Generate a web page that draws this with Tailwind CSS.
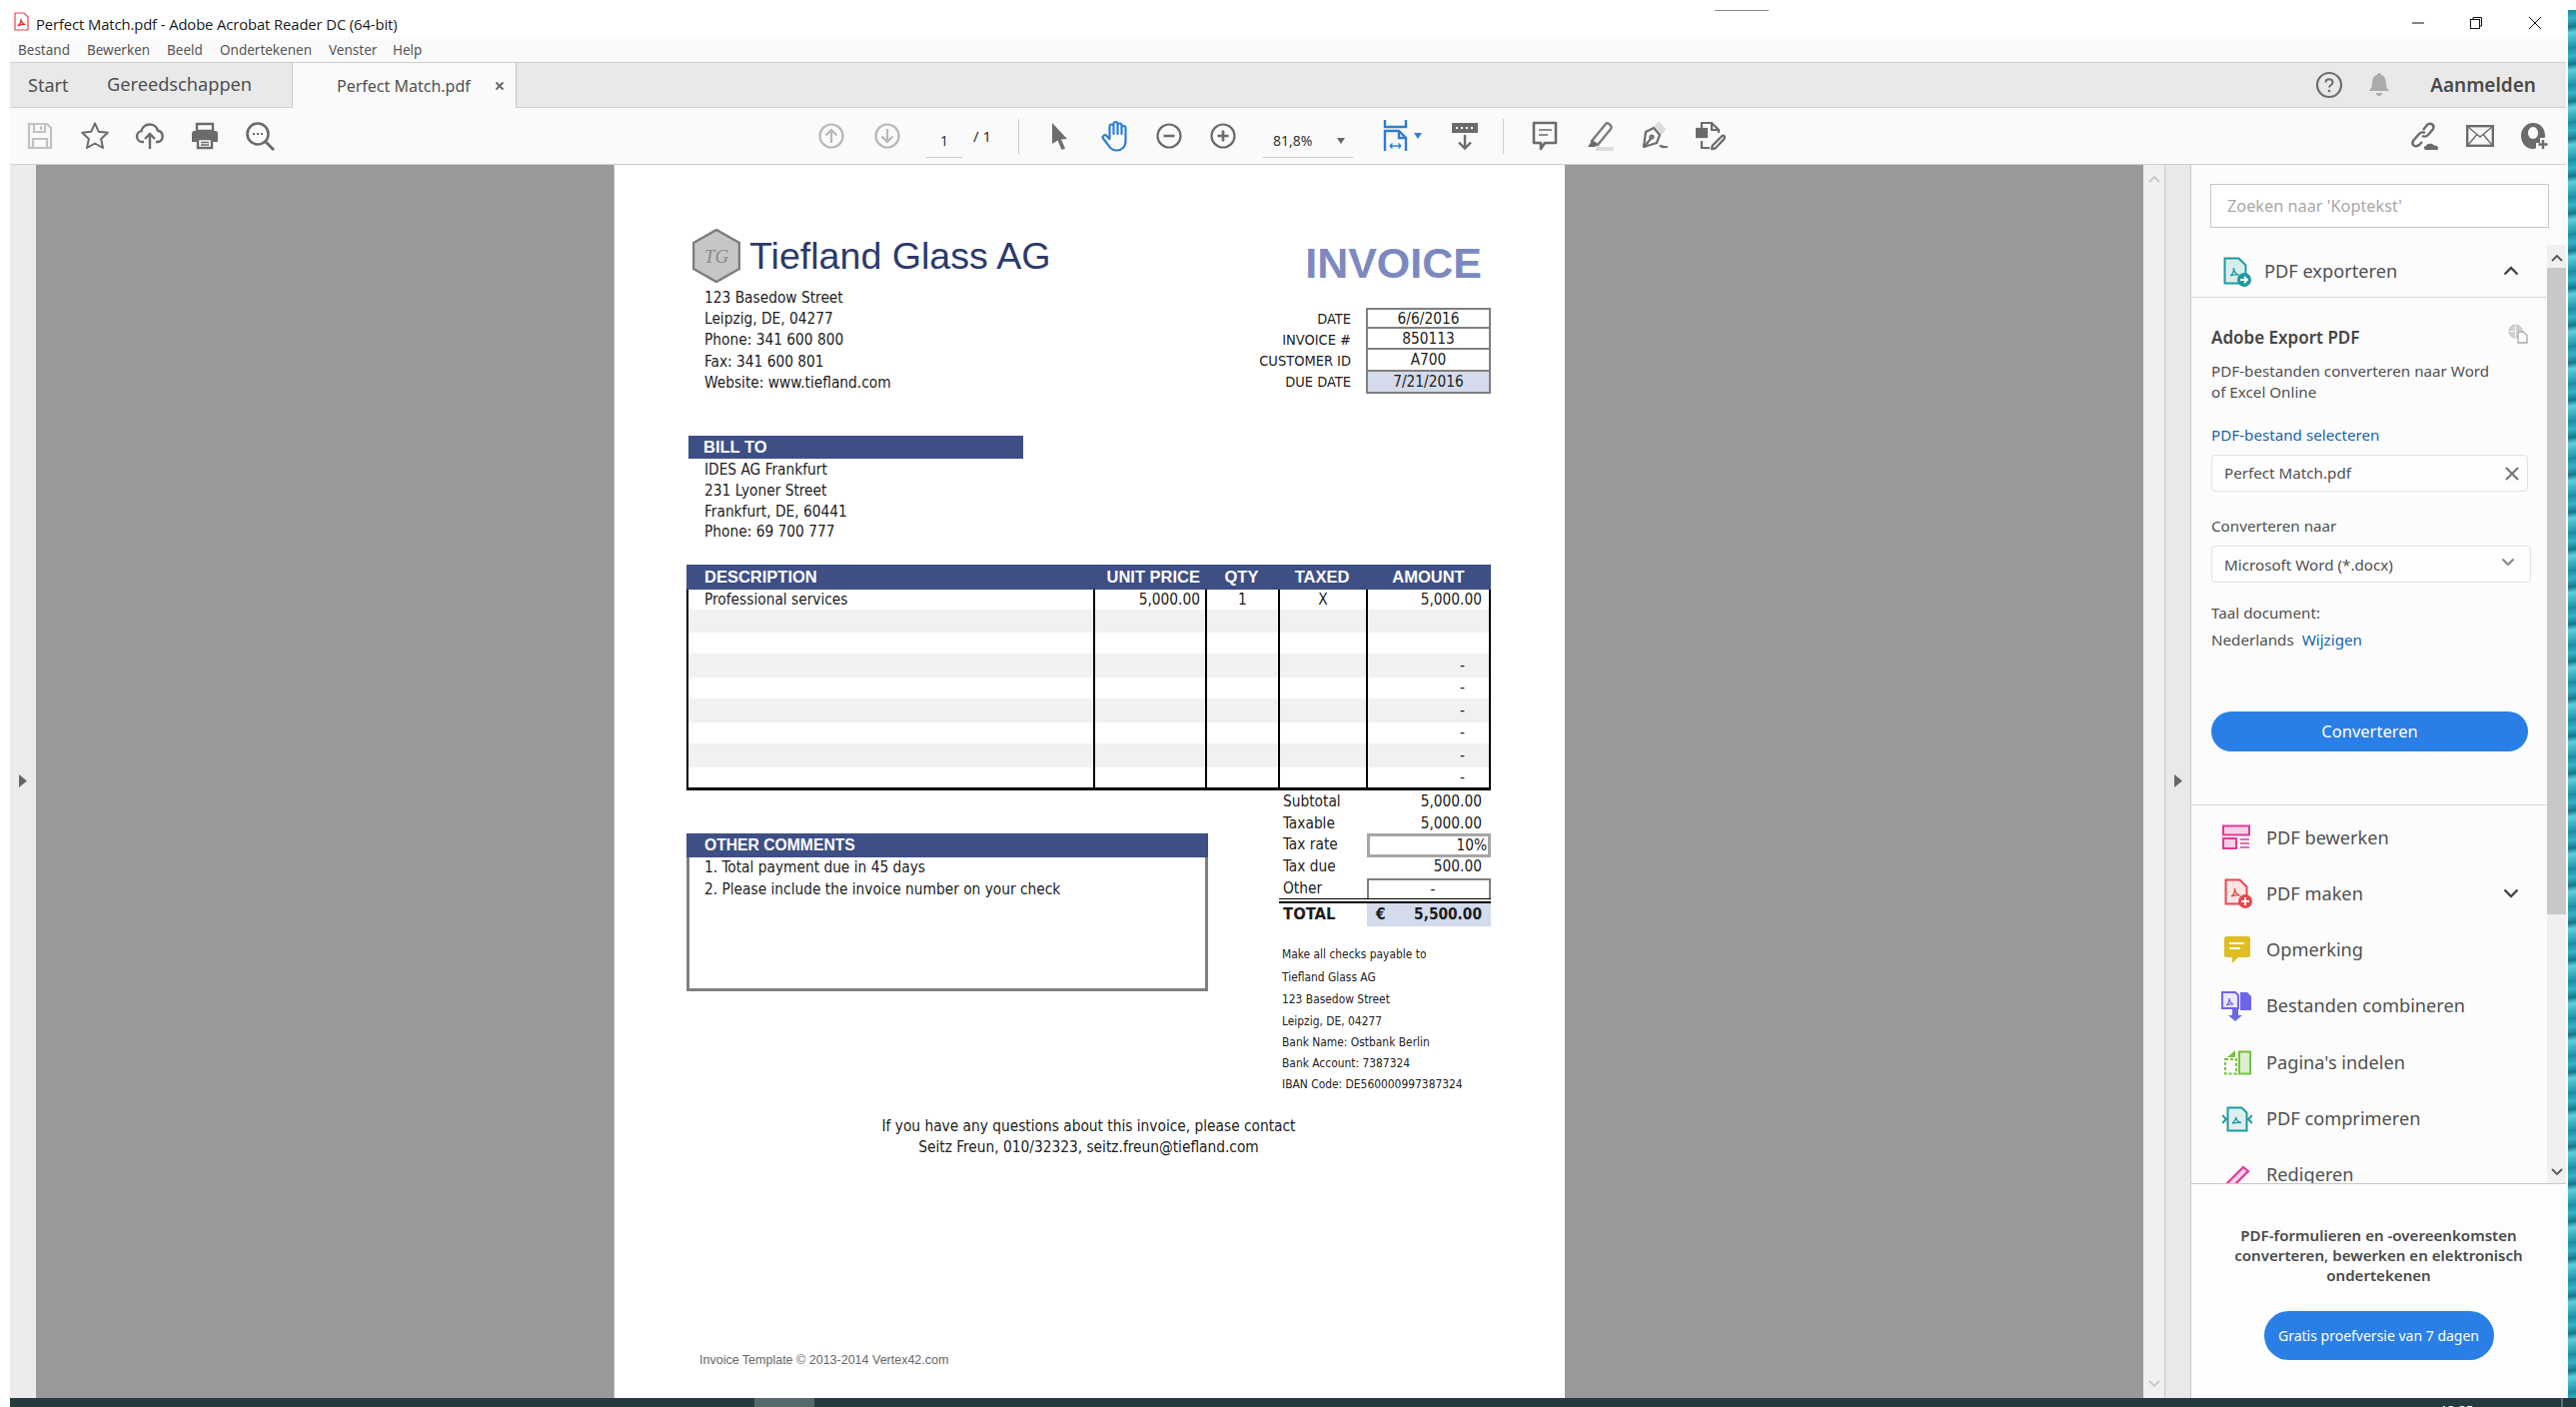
<!DOCTYPE html>
<html lang="nl">
<head>
<meta charset="utf-8">
<title>Perfect Match.pdf - Adobe Acrobat Reader DC</title>
<script src="https://cdn.jsdelivr.net/npm/@tailwindcss/browser@4"></script>
</head>
<body class="relative w-[2578px] h-[1408px] overflow-hidden bg-white flex font-['Noto_Sans',sans-serif] text-[#505050]">
<div class="absolute left-[1716px] top-[10px] w-[54px] h-px bg-[#8a8a8a]"></div>

<div class="w-[2570px] h-full flex flex-col shrink-0">
  <!-- title bar -->
  <div class="h-[37px] flex items-center bg-white shrink-0">
    <svg class="ml-[14px] mt-[6px]" width="15" height="19" viewBox="0 0 15 19"><path d="M1 1h9l4 4v13H1z" fill="#fff" stroke="#e2474b" stroke-width="1.2"/><path d="M3.500 14c2-1 3.500-4 3.500-7 0 3 2 5 4.500 5.500-3-.5-5.500 0-8 1.500z" fill="none" stroke="#e2262b" stroke-width="1.200"/></svg>
    <span class="ml-[7px] mt-[11px] text-[14.800px] text-[#1a1a1a] leading-none font-['Open_Sans',sans-serif] tracking-[-0.1px]">Perfect Match.pdf - Adobe Acrobat Reader DC (64-bit)</span>
    <div class="ml-auto flex items-center pr-[26px] mt-[8px]">
      <svg width="14" height="14" viewBox="0 0 14 14"><path d="M1 7h12" stroke="#111" stroke-width="1"/></svg>
      <svg class="ml-[44px]" width="14" height="14" viewBox="0 0 14 14" fill="none" stroke="#111" stroke-width="1"><rect x="1.500" y="3.500" width="9" height="9" fill="#fff"/><path d="M4 3.500V1.500h8.500V10h-2"/></svg>
      <svg class="ml-[45px]" width="14" height="14" viewBox="0 0 14 14" fill="none" stroke="#111" stroke-width="1"><path d="M1 1l12 12M13 1L1 13"/></svg>
    </div>
  </div>

  <div class="flex-1 min-h-0 flex flex-col ml-[10px] mr-[2px]">
    <!-- menu bar -->
    <div class="h-[26px] shrink-0 bg-[#fafafa] flex items-center pl-[8px] pt-[2px] text-[13.500px] text-[#555] border-b border-[#cfcfcf]">
      <span class="w-[69px]">Bestand</span><span class="w-[80px]">Bewerken</span><span class="w-[53px]">Beeld</span><span class="w-[109px]">Ondertekenen</span><span class="w-[64px]">Venster</span><span>Help</span>
    </div>
    <!-- tabs -->
    <div class="h-[45px] shrink-0 bg-[#e9e9e9] flex items-stretch border-b border-[#cfcfcf]">
      <span class="ml-[18px] w-[79px] self-center text-[18px]">Start</span>
      <span class="w-[185px] self-center text-[18.200px]">Gereedschappen</span>
      <div class="w-[225px] -mb-px bg-[#fafafa] border-x border-[#c8c8c8] flex items-center pl-[44px]">
        <span class="text-[16px] w-[158px]">Perfect Match.pdf</span>
        <svg width="10" height="10" viewBox="0 0 10 10"><path d="M1.500 1.500l7 7M8.500 1.500l-7 7" stroke="#666" stroke-width="1.800"/></svg>
      </div>
      <div class="ml-auto flex items-center pr-[30px]">
        <svg width="28" height="28" viewBox="0 0 28 28" fill="none"><circle cx="14" cy="14" r="12" stroke="#6e6e6e" stroke-width="2.200"/><path d="M10.500 11.500c0-4.500 7-4.500 7 0 0 3-3.500 2.500-3.500 5" stroke="#6e6e6e" stroke-width="2"/><circle cx="14" cy="20" r="1.300" fill="#6e6e6e"/></svg>
        <svg class="ml-[24px]" width="24" height="28" viewBox="0 0 24 28"><path d="M12 2c1.500 0 2 1 2 2 4 1 5 5 5 9 0 4 2 5 3 7H2c1-2 3-3 3-7 0-4 1-8 5-9 0-1 .5-2 2-2z" fill="#ababab"/><path d="M9 22h6c0 2-1.500 3-3 3s-3-1-3-3z" fill="#ababab"/></svg>
        <span class="ml-[39px] text-[19px] font-semibold text-[#4a4a4a]">Aanmelden</span>
      </div>
    </div>
    <!-- toolbar -->
    <div class="h-[57px] shrink-0 bg-[#fafafa] flex items-center border-b border-[#cfcfcf] pl-[2px] pr-[4px]">
      <div class="w-[55px] flex justify-center"><svg width="26" height="28" viewBox="0 0 26 28" fill="none" stroke="#c2c2c2" stroke-width="2.200"><path d="M2 2h18l4 4v20H2z"/><path d="M7 2v8h11V2M14 4v4M6 26v-9h14v9"/></svg></div>
      <div class="w-[55px] flex justify-center"><svg width="30" height="30" viewBox="0 0 30 30" fill="none" stroke="#6b6b6b" stroke-width="2"><path d="M15 2.500l3.800 8.300 9 1-6.700 6.200 1.900 9L15 22.500 7 27l1.900-9-6.700-6.200 9-1z" stroke-linejoin="round"/></svg></div>
      <div class="w-[55px] flex justify-center"><svg width="30" height="30" viewBox="0 0 30 30" fill="none" stroke="#6b6b6b" stroke-width="2.400"><path d="M9 21H7.500A5.500 5.500 0 0 1 6.500 10.100 8.500 8.500 0 0 1 23 9.800 5.700 5.700 0 0 1 23 21h-2"/><path d="M15 28V13M10 18l5-5 5 5"/></svg></div>
      <div class="w-[55px] flex justify-center"><svg width="28" height="28" viewBox="0 0 28 28"><path d="M6 2h16v7H6z" fill="none" stroke="#6b6b6b" stroke-width="2.400"/><path d="M3 9h22a2.500 2.500 0 0 1 2 2.500V20h-5v-4H6v4H1v-8.500A2.500 2.500 0 0 1 3 9z" fill="#6b6b6b"/><path d="M7 17h14v9H7z" fill="none" stroke="#6b6b6b" stroke-width="2.400"/><path d="M10 20.500h8M10 23h8" stroke="#6b6b6b" stroke-width="1.300"/></svg></div>
      <div class="w-[55px] flex justify-center"><svg width="30" height="30" viewBox="0 0 30 30" fill="none" stroke="#6b6b6b" stroke-width="2.600"><circle cx="13" cy="13" r="10.500"/><path d="M20.500 20.500L29 29" stroke-width="3"/><path d="M8 13h2M12 13h2M16 13h2" stroke-width="2"/></svg></div>

      <div class="ml-[517px] w-[56px] flex justify-center"><svg width="26" height="26" viewBox="0 0 26 26" fill="none" stroke="#b8b8b8" stroke-width="2.200"><circle cx="13" cy="13" r="11.500"/><path d="M13 20V7M7.500 12.500L13 7l5.500 5.500"/></svg></div>
      <div class="w-[55px] flex justify-center"><svg width="26" height="26" viewBox="0 0 26 26" fill="none" stroke="#b8b8b8" stroke-width="2.200"><circle cx="13" cy="13" r="11.500"/><path d="M13 6v13M7.500 13.500L13 19l5.500-5.500"/></svg></div>
      <div class="ml-[12px] w-[36px] h-[34px] flex items-center justify-center text-[14px] border-b border-[#c8c8c8] text-[#333] self-end mb-[6px]">1</div>
      <span class="ml-[11px] w-[18px] text-[15px] text-[#333] whitespace-nowrap">/ 1</span>
      <div class="ml-[27px] w-px h-[35px] bg-[#d0d0d0]"></div>
      <div class="ml-[13px] w-[55px] flex justify-center"><svg width="18" height="28" viewBox="0 0 18 28"><path d="M1 1l15 16-6 .5 4 9-3.500 1.500-4-9.500L1 22z" fill="#6e6e6e"/></svg></div>
      <div class="w-[55px] flex justify-center"><svg width="28" height="32" viewBox="0 0 28 32" fill="none" stroke="#2d7dd2" stroke-width="2.200" stroke-linejoin="round"><path d="M8.500 19V6.500a2 2 0 0 1 4 0V14V4a2 2 0 0 1 4 0v10V5.500a2 2 0 0 1 4 0V14V8a2 2 0 0 1 4 0v13c0 6-4 9.500-9 9.500-4 0-6.500-2-8.500-5.500L2 18.500c-1.500-2.500 2-4.500 3.500-2.500z"/></svg></div>
      <div class="w-[54px] flex justify-center"><svg width="26" height="26" viewBox="0 0 26 26" fill="none" stroke="#6b6b6b" stroke-width="2.200"><circle cx="13" cy="13" r="11.500"/><path d="M7.500 13h11" stroke-width="2.600"/></svg></div>
      <div class="w-[54px] flex justify-center"><svg width="26" height="26" viewBox="0 0 26 26" fill="none" stroke="#6b6b6b" stroke-width="2.200"><circle cx="13" cy="13" r="11.500"/><path d="M7.500 13h11M13 7.500v11" stroke-width="2.600"/></svg></div>
      <div class="ml-[13px] w-[90px] h-[34px] self-end mb-[6px] flex items-center justify-between pl-[10px] pr-[8px] border-b border-[#c8c8c8] text-[14px] text-[#333]"><span>81,8%</span><svg width="8" height="6" viewBox="0 0 8 6"><path d="M0 0h8L4 6z" fill="#666"/></svg></div>
      <div class="ml-[22px] w-[54px] flex justify-center items-center gap-[5px]"><svg width="26" height="32" viewBox="0 0 26 32" fill="none" stroke="#2d7dd2" stroke-width="2.400"><path d="M2 0v7h21V0"/><path d="M2 31V11h14l7 7v13"/><path d="M16 11v7h7" /><path d="M7 26h11M7 26l2.500-2.500M7 26l2.500 2.500M18 26l-2.500-2.500M18 26l-2.500 2.500" stroke-width="1.400"/></svg><svg width="8" height="6" viewBox="0 0 8 6"><path d="M0 0h8L4 6z" fill="#2d7dd2"/></svg></div>
      <div class="ml-[9px] w-[54px] flex justify-center"><svg width="28" height="28" viewBox="0 0 28 28" fill="none"><rect x="1" y="1" width="26" height="10" fill="#6b6b6b"/><path d="M5 6h2M10 6h2M15 6h2M20 6h2" stroke="#fff" stroke-width="2"/><path d="M14 13v13M8 20.500l6 6 6-6" stroke="#6b6b6b" stroke-width="2.400"/></svg></div>
      <div class="ml-[11px] w-px h-[35px] bg-[#d0d0d0]"></div>
      <div class="ml-[13px] w-[55px] flex justify-center"><svg width="26" height="31" viewBox="0 0 26 31" fill="none" stroke="#6b6b6b" stroke-width="2.600"><path d="M2 2h22v20H13l-4 6v-6H2z" stroke-linejoin="round"/><path d="M7 9h13M7 14h9" stroke-width="1.600"/></svg></div>
      <div class="w-[55px] flex justify-center"><svg width="30" height="30" viewBox="0 0 30 30"><path d="M7 20L21 3c2-2 7 2 5 5L13 24z" fill="none" stroke="#7a7a7a" stroke-width="2.400"/><path d="M7 20l6 4-3 2H3z" fill="#6b6b6b"/><path d="M11 26h18v4H11z" fill="#dcdcdc"/></svg></div>
      <div class="w-[56px] flex justify-center"><svg width="30" height="30" viewBox="0 0 30 30" fill="none" stroke="#6b6b6b" stroke-width="2.200"><path d="M15 6l4-4 6 6-4 5" fill="#dcdcdc" stroke="#dcdcdc"/><path d="M6 11l8-4 6 7-3 8-13 4z" stroke-linejoin="round"/><path d="M4 26l7-8"/><circle cx="12" cy="16" r="1.500"/><path d="M20 26c2-4 2 2 3 0s1 1 2 0 1 1 3 0" stroke-width="1.800"/></svg></div>
      <div class="w-[56px] flex justify-center"><svg width="30" height="30" viewBox="0 0 30 30" fill="none" stroke="#6b6b6b" stroke-width="2.200"><rect x="1" y="8" width="10" height="8" fill="#6b6b6b"/><path d="M6 8V2h10l7 7v3M16 2v7h7M6 20v7h8"/><path d="M17 27l-1 2 .5-4 10-10c2-1 3 1 2 3L19 28z"/></svg></div>

      <div class="ml-auto w-[55px] flex justify-center"><svg width="32" height="30" viewBox="0 0 32 30" fill="none" stroke="#6b6b6b" stroke-width="2.400"><path d="M14 9l4-5c3-3 8 0 6 4l-5 6c-2 2-4 2-6 1M16 12c-2-1-4-1-6 1l-6 7c-2 4 2 7 6 4l3-3"/><path d="M17 29c-2.500 0-3-4 0-4 .5-3 7-3 8-.5 4-1 6 4.500 2 4.500z" fill="#6b6b6b" stroke="none"/></svg></div>
      <div class="w-[55px] flex justify-center"><svg width="28" height="22" viewBox="0 0 28 22" fill="none" stroke="#6b6b6b" stroke-width="2.400"><rect x="1.200" y="1.200" width="25.600" height="19.600"/><path d="M2 2l12 10L26 2M2 20l8.500-10M26 20l-8.500-10" stroke-width="1.400"/></svg></div>
      <div class="w-[55px] flex justify-center"><svg width="30" height="28" viewBox="0 0 30 28"><path d="M13 1c6.500 0 12 5 12 12.500 0 1-.1 2-.3 2.500H20v5h-4v5.600A13 13 0 0 1 13 27C6 27 1 21 1 14S6 1 13 1z" fill="#6b6b6b"/><path d="M13 5c3 0 5 3 5 6s-2 6-5 6-5-3-5-6 2-6 5-6z" fill="#fafafa"/><path d="M23 18v9M18.500 22.500h9" stroke="#6b6b6b" stroke-width="2.400"/></svg></div>
    </div>

    <!-- document area -->
    <div class="flex-1 min-h-0 flex">
      <div class="w-[26px] bg-[#ececec] flex items-center justify-center"><svg class="mt-[-2px]" width="8" height="13" viewBox="0 0 8 13"><path d="M0 0l8 6.500L0 13z" fill="#666"/></svg></div>
      <div class="w-[578px] bg-[#999999]"></div>

      <!-- invoice page -->
      <div class="w-[952px] bg-white flex flex-col pl-[72px] pr-[74px] pt-[64px] pb-[29px] text-[#1c1c1c] text-[15.300px] font-['DejaVu_Sans',sans-serif] [font-stretch:condensed] leading-[21px] border-l border-[#b5b5b5]">
        <div class="h-[207px] flex justify-between shrink-0">
          <div>
            <div class="ml-[6px] h-[54px] flex items-start">
              <div class="relative w-[48px] h-[54px]">
                <svg width="48" height="54" viewBox="0 0 48 54"><path d="M24 1l23 13v26L24 53 1 40V14z" fill="#c6c6c6" stroke="#7c7c7c" stroke-width="2.500"/></svg>
                <span class="absolute inset-0 flex items-center justify-center font-['Liberation_Serif',serif] italic text-[19px] text-[#8a8a8a]">TG</span>
              </div>
              <span class="ml-[9px] mt-[6px] font-['Liberation_Sans',sans-serif] [font-stretch:normal] text-[37.600px] leading-[42px] text-[#2c3a6c] whitespace-nowrap">Tiefland Glass AG</span>
            </div>
            <div class="ml-[18px] mt-[5px] [&>p]:h-[21.200px] whitespace-nowrap">
              <p>123 Basedow Street</p><p>Leipzig, DE, 04277</p><p>Phone: 341 600 800</p><p>Fax: 341 600 801</p><p>Website: www.tiefland.com</p>
            </div>
          </div>
          <div class="flex flex-col items-end">
            <div class="mt-[18px] mr-[9px] h-[32px] font-['Liberation_Sans',sans-serif] [font-stretch:normal] font-bold text-[43px] leading-[32px] text-[#7b89c0]">INVOICE</div>
            <div class="mt-[29px] w-[300px] grid grid-cols-[175px_125px] text-right">
              <div class="pr-[15px] h-[21px] text-[14.500px] leading-[23px]">DATE</div><div class="h-[21px] border-2 border-[#7f7f7f] text-center leading-[18px]">6/6/2016</div>
              <div class="pr-[15px] h-[21px] text-[14.500px] leading-[23px]">INVOICE #</div><div class="h-[21px] border-x-2 border-b-2 border-[#7f7f7f] text-center leading-[20px]">850113</div>
              <div class="pr-[15px] h-[22px] text-[14.500px] leading-[23px]">CUSTOMER ID</div><div class="h-[22px] border-x-2 border-b-2 border-[#7f7f7f] text-center leading-[20px]">A700</div>
              <div class="pr-[15px] h-[22px] text-[14.500px]">DUE DATE</div><div class="h-[22px] border-x-2 border-b-2 border-[#7f7f7f] bg-[#d3dbec] text-center leading-[20px]">7/21/2016</div>
            </div>
          </div>
        </div>

        <div class="ml-[2px] w-[335px] h-[23px] bg-[#3e4f85] pl-[15px] font-['Liberation_Sans',sans-serif] [font-stretch:normal] font-bold text-[16.500px] leading-[23px] text-white shrink-0">BILL TO</div>
        <div class="ml-[18px] mt-px [&>p]:h-[20.800px] shrink-0">
          <p>IDES AG Frankfurt</p><p>231 Lyoner Street</p><p>Frankfurt, DE, 60441</p><p>Phone: 69 700 777</p>
        </div>

        <!-- items table -->
        <div class="mt-[22px] shrink-0">
          <div class="h-[25px] bg-[#3e4f85] grid grid-cols-[407px_112px_73px_88px_125px] font-['Liberation_Sans',sans-serif] [font-stretch:normal] font-bold text-[16.500px] leading-[25px] text-white">
            <div class="pl-[18px]">DESCRIPTION</div><div class="text-right pr-[5px] whitespace-nowrap">UNIT PRICE</div><div class="text-center">QTY</div><div class="text-center">TAXED</div><div class="text-center">AMOUNT</div>
          </div>
          <div class="border-x-2 border-b-[3px] border-black">
            <div class="h-[20px] grid grid-cols-[405px_112px_73px_88px_123px] leading-[20px]"><div class="pl-[16px]">Professional services</div><div class="border-l-2 border-black text-right pr-[5px]">5,000.00</div><div class="border-l-2 border-black text-center">1</div><div class="border-l-2 border-black text-center">X</div><div class="border-l-2 border-black text-right pr-[7px]">5,000.00</div></div>
            <div class="h-[23px] bg-[#f1f1f1] grid grid-cols-[405px_112px_73px_88px_123px]"><div></div><div class="border-l-2 border-black"></div><div class="border-l-2 border-black"></div><div class="border-l-2 border-black"></div><div class="border-l-2 border-black"></div></div>
            <div class="h-[21px] grid grid-cols-[405px_112px_73px_88px_123px]"><div></div><div class="border-l-2 border-black"></div><div class="border-l-2 border-black"></div><div class="border-l-2 border-black"></div><div class="border-l-2 border-black"></div></div>
            <div class="h-[24px] bg-[#f1f1f1] grid grid-cols-[405px_112px_73px_88px_123px]"><div></div><div class="border-l-2 border-black"></div><div class="border-l-2 border-black"></div><div class="border-l-2 border-black"></div><div class="border-l-2 border-black text-right pr-[24px] leading-[24px]">-</div></div>
            <div class="h-[21px] grid grid-cols-[405px_112px_73px_88px_123px]"><div></div><div class="border-l-2 border-black"></div><div class="border-l-2 border-black"></div><div class="border-l-2 border-black"></div><div class="border-l-2 border-black text-right pr-[24px]">-</div></div>
            <div class="h-[24px] bg-[#f1f1f1] grid grid-cols-[405px_112px_73px_88px_123px]"><div></div><div class="border-l-2 border-black"></div><div class="border-l-2 border-black"></div><div class="border-l-2 border-black"></div><div class="border-l-2 border-black text-right pr-[24px] leading-[24px]">-</div></div>
            <div class="h-[21px] grid grid-cols-[405px_112px_73px_88px_123px]"><div></div><div class="border-l-2 border-black"></div><div class="border-l-2 border-black"></div><div class="border-l-2 border-black"></div><div class="border-l-2 border-black text-right pr-[24px]">-</div></div>
            <div class="h-[24px] bg-[#f1f1f1] grid grid-cols-[405px_112px_73px_88px_123px]"><div></div><div class="border-l-2 border-black"></div><div class="border-l-2 border-black"></div><div class="border-l-2 border-black"></div><div class="border-l-2 border-black text-right pr-[24px] leading-[24px]">-</div></div>
            <div class="h-[20px] grid grid-cols-[405px_112px_73px_88px_123px]"><div></div><div class="border-l-2 border-black"></div><div class="border-l-2 border-black"></div><div class="border-l-2 border-black"></div><div class="border-l-2 border-black text-right pr-[24px] leading-[20px]">-</div></div>
          </div>
        </div>

        <!-- comments + totals -->
        <div class="flex justify-between shrink-0">
          <div class="mt-[43px] w-[522px] h-[158px] border-x-[3px] border-b-[3px] border-[#7f7f7f]">
            <div class="-mx-[3px] h-[24px] bg-[#3e4f85] pl-[18px] font-['Liberation_Sans',sans-serif] [font-stretch:normal] font-bold text-[15.700px] leading-[24px] text-white">OTHER COMMENTS</div>
            <div class="pl-[15px] [&>p]:h-[22px]"><p>1. Total payment due in 45 days</p><p>2. Please include the invoice number on your check</p></div>
          </div>
          <div class="w-[212px]">
            <div class="h-[22px] flex leading-[23px]"><span class="w-[88px] pl-[4px]">Subtotal</span><span class="flex-1 text-right pr-[9px]">5,000.00</span></div>
            <div class="h-[22px] flex leading-[23px]"><span class="w-[88px] pl-[4px]">Taxable</span><span class="flex-1 text-right pr-[9px]">5,000.00</span></div>
            <div class="h-[22px] flex"><span class="w-[88px] pl-[4px]">Tax rate</span><span class="flex-1 h-[24px] -mt-px border-[3px] border-[#a6a6a6] text-right leading-[18px] pr-[1px]">10%</span></div>
            <div class="h-[22px] flex"><span class="w-[88px] pl-[4px]">Tax due</span><span class="flex-1 text-right pr-[9px]">500.00</span></div>
            <div class="h-[21px] flex border-b border-black"><span class="w-[88px] pl-[4px] leading-[20px]">Other</span><span class="flex-1 border-x-2 border-t-2 border-[#7f7f7f] text-center pl-[8px] leading-[18px]">-</span></div>
            <div class="h-[25px] flex border-t-[2px] mt-[2px] border-black font-bold"><span class="w-[88px] pl-[4px] leading-[22px] text-[16.500px]">TOTAL</span><span class="flex-1 bg-[#d3dbec] flex justify-between pl-[9px] pr-[9px] leading-[22px]"><span>€</span><span>5,500.00</span></span></div>
            <div class="mt-[18px] pl-[3px] text-[11.900px] whitespace-nowrap">
              <p class="h-[22.500px]">Make all checks payable to</p><p class="h-[22.500px]">Tiefland Glass AG</p><p class="h-[21.500px]">123 Basedow Street</p><p class="h-[21px]">Leipzig, DE, 04277</p><p class="h-[21px]">Bank Name: Ostbank Berlin</p><p class="h-[21px]">Bank Account: 7387324</p><p class="h-[21px]">IBAN Code: DE560000997387324</p>
            </div>
          </div>
        </div>

        <div class="mt-[21px] text-center [&>p]:h-[21px] shrink-0"><p>If you have any questions about this invoice, please contact</p><p>Seitz Freun, 010/32323, seitz.freun@tiefland.com</p></div>
        <div class="mt-auto ml-[13px] font-['Liberation_Sans',sans-serif] [font-stretch:normal] text-[12.500px] leading-[18px] text-[#666]">Invoice Template © 2013-2014 Vertex42.com</div>
      </div>

      <div class="w-[579px] bg-[#999999]"></div>
      <!-- doc scrollbar -->
      <div class="w-[22px] bg-[#f0f0f0] flex flex-col justify-between items-center py-[10px] border-r border-[#c8c8c8]">
        <svg width="12" height="8" viewBox="0 0 12 8"><path d="M1 7l5-5 5 5" fill="none" stroke="#cacaca" stroke-width="2"/></svg>
        <svg width="12" height="8" viewBox="0 0 12 8"><path d="M1 1l5 5 5-5" fill="none" stroke="#cacaca" stroke-width="2"/></svg>
      </div>
      <div class="w-[26px] bg-[#e9e9e9] flex items-center justify-center border-r border-[#c8c8c8]"><svg class="mt-[-2px]" width="8" height="13" viewBox="0 0 8 13"><path d="M0 0l8 6.500L0 13z" fill="#666"/></svg></div>

      <!-- right panel -->
      <div class="w-[375px] bg-[#fcfcfc] flex flex-col">
        <div class="ml-[19px] mr-[17px] mt-[19px] h-[44px] shrink-0 bg-white border border-[#c8c8c8] pl-[16px] flex items-center text-[16.300px] text-[#a8a8a8]">Zoeken naar 'Koptekst'</div>
        <div class="mt-[17px] h-[939px] shrink-0 flex overflow-hidden">
          <div class="w-[356px] h-full overflow-hidden">
            <div class="h-[53px] border-b border-[#d8d8d8] flex items-center pl-[32px] pr-[28px] pt-[2px]">
              <svg width="28" height="30" viewBox="0 0 28 30"><path d="M1.500 1.500h14l7 7v18h-21z" fill="#d8eeee" stroke="#1f9a9d" stroke-width="2"/><path d="M7 19c2-1 3.500-4 3.500-8 0 3.500 2 6 5 7-3-.3-6 0-8.500 1z" fill="none" stroke="#1f9a9d" stroke-width="1.300"/><circle cx="21" cy="23" r="7" fill="#1f9a9d"/><path d="M17 23h7M21 20l3 3-3 3" fill="none" stroke="#fff" stroke-width="1.800"/></svg>
              <span class="ml-[13px] text-[18.200px]">PDF exporteren</span>
              <svg class="ml-auto mt-[-2px]" width="16" height="10" viewBox="0 0 16 10"><path d="M1.500 8.500L8 2l6.500 6.500" fill="none" stroke="#444" stroke-width="2.400"/></svg>
            </div>
            <div class="pl-[20px] pr-[16px] text-[15.200px]">
              <div class="mt-[29px] h-[22px] flex justify-between items-center pr-[3px]"><span class="font-semibold text-[17px] text-[#454545]">Adobe Export PDF</span><svg class="mt-[-8px]" width="20" height="20" viewBox="0 0 20 20"><circle cx="7.500" cy="7.500" r="6.500" fill="#d0d0d0" stroke="#bdbdbd"/><path d="M1 7.500h13M7.500 1v13" stroke="#f5f5f5"/><path d="M10 8h5l4 3.500V19h-9z" fill="#fcfcfc" stroke="#aaa" stroke-width="1.300"/></svg></div>
              <p class="mt-[12px] leading-[21px] whitespace-nowrap">PDF-bestanden converteren naar Word<br>of Excel Online</p>
              <div class="mt-[22px] h-[22px] leading-[21px] text-[#1a62a8]">PDF-bestand selecteren</div>
              <div class="mt-[8px] h-[37px] w-[317px] border border-[#e2e2e2] rounded-[4px] flex items-center justify-between pl-[12px] pr-[8px] bg-[#fdfdfd]"><span>Perfect Match.pdf</span><svg width="14" height="14" viewBox="0 0 14 14"><path d="M1 1l12 12M13 1L1 13" stroke="#777" stroke-width="2.200"/></svg></div>
              <div class="mt-[24px] h-[22px] leading-[21px]">Converteren naar</div>
              <div class="mt-[8px] h-[37px] w-[320px] border border-[#e2e2e2] rounded-[4px] flex items-center justify-between pl-[12px] pr-[15px] bg-[#fdfdfd]"><span class="mt-[2px]">Microsoft Word (*.docx)</span><svg class="mt-[-4px]" width="14" height="9" viewBox="0 0 14 9"><path d="M1.500 1.500L7 7l5.500-5.500" fill="none" stroke="#8a8a8a" stroke-width="2.200"/></svg></div>
              <div class="mt-[20px] h-[22px] leading-[21px]">Taal document:</div>
              <div class="mt-[5px] h-[22px] leading-[21px]">Nederlands&nbsp; <span class="text-[#1a62a8]">Wijzigen</span></div>
              <div class="mt-[60px] h-[40px] w-[317px] rounded-full bg-[#2a7fe6] text-white text-[16.500px] flex items-center justify-center">Converteren</div>
            </div>
            <div class="mt-[53px] border-t border-[#d8d8d8] pt-[4px] text-[18.200px] [&>div]:h-[56.300px]">
              <div class="flex items-center pl-[30px]"><span class="w-[45px] shrink-0"><svg width="30" height="26" viewBox="0 0 30 26" fill="none" stroke="#e0399a" stroke-width="2"><rect x="2" y="1.500" width="26" height="9" fill="#f8d3e8"/><rect x="2" y="14" width="13" height="10" fill="#f8d3e8"/><path d="M19 15h9M19 19h9M19 23h9" stroke-width="1.500"/></svg></span><span>PDF bewerken</span></div>
              <div class="flex items-center pl-[33px] pr-[28px]"><span class="w-[42px] shrink-0"><svg width="28" height="30" viewBox="0 0 28 30"><path d="M1.500 1.500h14l7 7v17h-21z" fill="#fbe5e5" stroke="#e8474d" stroke-width="2"/><path d="M7 18c2-1 3.500-4 3.500-8 0 3.500 2 6 5 7-3-.3-6 0-8.500 1z" fill="none" stroke="#e8474d" stroke-width="1.300"/><circle cx="21" cy="23" r="7" fill="#e8474d"/><path d="M17 23h8M21 19v8" stroke="#fff" stroke-width="2"/></svg></span><span>PDF maken</span><svg class="ml-auto" width="16" height="10" viewBox="0 0 16 10"><path d="M1.500 1.500L8 8l6.500-6.500" fill="none" stroke="#444" stroke-width="2.400"/></svg></div>
              <div class="flex items-center pl-[33px]"><span class="w-[42px] shrink-0"><svg width="26" height="27" viewBox="0 0 26 27"><path d="M2 0h22a2 2 0 0 1 2 2v17a2 2 0 0 1-2 2H14l-6 6v-6H2a2 2 0 0 1-2-2V2a2 2 0 0 1 2-2z" fill="#e0bd24"/><path d="M5 7h15M5 12h11" stroke="#fff" stroke-width="2"/></svg></span><span>Opmerking</span></div>
              <div class="flex items-center pl-[30px]"><span class="w-[45px] shrink-0"><svg width="30" height="30" viewBox="0 0 30 30"><path d="M19 1h7l4 4v14H19z" fill="#6e66ea"/><path d="M1 1h13l3 3v13H1z" fill="#e9e7fd" stroke="#6e66ea" stroke-width="2"/><path d="M5 14c2-1 3-3 3-7 0 3 2 5 4 6-3-.3-5 0-7 1z" fill="none" stroke="#6e66ea" stroke-width="1.200"/><path d="M11 18h6v6h4l-7 6-7-6h4z" fill="#6e66ea"/></svg></span><span>Bestanden combineren</span></div>
              <div class="flex items-center pl-[33px]"><span class="w-[42px] shrink-0"><svg width="27" height="25" viewBox="0 0 27 25"><rect x="15" y="1.500" width="11" height="22" fill="#deefd0" stroke="#74c23e" stroke-width="2"/><path d="M1 9h11v14.500H1z" fill="none" stroke="#74c23e" stroke-width="2" stroke-dasharray="3 2"/><path d="M11 0v7H3z" fill="#74c23e"/></svg></span><span>Pagina's indelen</span></div>
              <div class="flex items-center pl-[31px]"><span class="w-[44px] shrink-0"><svg width="30" height="26" viewBox="0 0 30 26"><path d="M5.500 1.500h14l5 5v18h-19z" fill="#dcf0f0" stroke="#1f9a9d" stroke-width="2"/><path d="M10 17c2-1 3-3 4-6 0 3 2 5 5 5.500-3-.2-6 0-9 .5z" fill="none" stroke="#1f9a9d" stroke-width="1.300"/><path d="M0 9l4 4-4 4M30 9l-4 4 4 4" fill="none" stroke="#1f9a9d" stroke-width="2"/></svg></span><span>PDF comprimeren</span></div>
              <div class="flex items-center pl-[33px]"><span class="w-[42px] shrink-0"><svg width="28" height="28" viewBox="0 0 28 28"><path d="M3 22L19 6l5 4L9 25z" fill="#f8d3e8" stroke="#e0399a" stroke-width="2.200"/></svg></span><span>Redigeren</span></div>
            </div>
          </div>
          <!-- panel scrollbar -->
          <div class="w-[19px] h-full bg-[#f0f0f0] flex flex-col items-center">
            <div class="h-[21px] mt-[2px] w-full flex items-center justify-center"><svg width="12" height="8" viewBox="0 0 12 8"><path d="M1 7l5-5 5 5" fill="none" stroke="#555" stroke-width="1.800"/></svg></div>
            <div class="h-[647px] w-full bg-[#c8c8c8]"></div>
            <div class="mt-auto mb-[7px]"><svg width="12" height="8" viewBox="0 0 12 8"><path d="M1 1l5 5 5-5" fill="none" stroke="#555" stroke-width="1.800"/></svg></div>
          </div>
        </div>
        <div class="flex-1 border-t border-[#c8c8c8] pt-[41px] flex flex-col items-center bg-[#fdfdfd]">
          <p class="text-[15.100px] leading-[20px] font-semibold text-center text-[#4a4a4a] whitespace-nowrap">PDF-formulieren en -overeenkomsten<br>converteren, bewerken en elektronisch<br>ondertekenen</p>
          <div class="mt-[26px] w-[230px] h-[49px] rounded-full bg-[#2a7fe6] text-white text-[14px] flex items-center justify-center">Gratis proefversie van 7 dagen</div>
        </div>
      </div>
    </div>
  </div>
  <!-- taskbar sliver -->
  <div class="h-[9px] shrink-0 ml-[10px] bg-[#263b40] flex overflow-hidden relative">
    <div class="ml-[745px] w-[60px] bg-[#566a6c]"></div>
    <span class="absolute left-[2432px] top-[6px] text-[13px] leading-none text-white">13:25</span>
    <div class="absolute left-[2553px] top-0 w-[2px] h-full bg-[#5d7074]"></div>
  </div>
</div>
<div class="w-[8px] mt-[10px] h-[1398px] bg-[repeating-linear-gradient(172deg,#1a8b9e_0px,#35b4c4_9px,#15778a_17px,#5fcfd6_23px,#1c97a8_37px)]">
  <div class="mt-[1389px] h-[9px] bg-[#263b40]"></div>
</div>
</body>
</html>
